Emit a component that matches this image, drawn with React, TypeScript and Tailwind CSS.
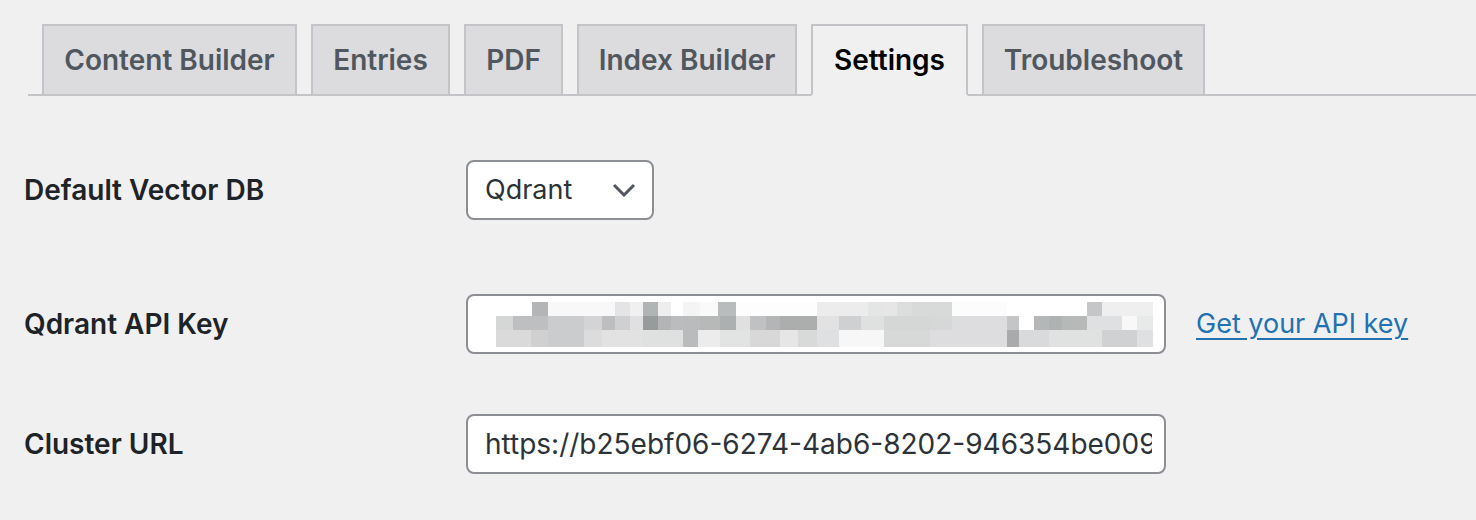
import React from 'react';

const tabs = [
  { label: 'Content Builder', w: 'w-[255px]' },
  { label: 'Entries', w: 'w-[139px]' },
  { label: 'PDF', w: 'w-[99px]' },
  { label: 'Index Builder', w: 'w-[220px]' },
  { label: 'Settings', w: 'w-[157px]', active: true },
  { label: 'Troubleshoot', w: 'w-[223px]' },
];

// pixelated (blurred) api key: [x0, x1, colour] per row, relative to the mosaic box
const mosaic: { y: number; h: number; cells: [number, number, string][] }[] = [
  {
    y: 0,
    h: 14,
    cells: [
      [36, 52, '#b4b5b6'], [52, 119, '#f8f8f8'], [119, 134, '#e4e4e6'], [134, 147, '#f0f0f0'],
      [147, 162, '#b1b4b4'], [162, 175, '#eeeeee'], [187, 204, '#f4f4f4'], [204, 222, '#fafafa'],
      [222, 240, '#b9bcbc'], [240, 321, '#fdfdfd'], [321, 372, '#ececec'], [372, 387, '#e4e5e5'],
      [387, 401, '#e6e6e7'], [401, 416, '#dcdddd'], [416, 456, '#d8d9d9'], [456, 511, '#fcfcfc'],
      [591, 606, '#c5c6c7'], [606, 657, '#efefef'],
    ],
  },
  {
    y: 14,
    h: 14,
    cells: [
      [0, 17, '#d5d6d6'], [17, 52, '#bebfc0'], [52, 88, '#cbcccd'], [88, 106, '#d4d4d6'],
      [106, 119, '#bdbebf'], [119, 134, '#cfd0d2'], [134, 147, '#e0e0e2'], [147, 162, '#989b9c'],
      [162, 175, '#b2b4b5'], [175, 187, '#bbbcbd'], [187, 204, '#b9bbbc'], [204, 224, '#b7b9b9'],
      [224, 240, '#adb0b0'], [240, 254, '#e0e0e1'], [254, 270, '#c0c1c2'], [270, 284, '#b3b5b6'],
      [284, 321, '#acaeae'], [321, 343, '#e2e2e3'], [343, 365, '#cfd0d1'], [365, 388, '#dfe0e0'],
      [388, 434, '#d5d6d6'], [434, 456, '#d6d7d7'], [456, 511, '#dddddf'], [511, 523, '#c4c5c6'],
      [538, 553, '#b4b6b7'], [553, 566, '#afb2b3'], [566, 591, '#b7b9b9'], [591, 626, '#dfe0e1'],
      [626, 641, '#f8f8f8'], [641, 657, '#e8e9e9'],
    ],
  },
  {
    y: 28,
    h: 17,
    cells: [
      [0, 35, '#dadadb'], [35, 52, '#d0d0d1'], [52, 88, '#cbcccd'], [88, 106, '#dcdcdd'],
      [106, 147, '#e2e2e3'], [147, 187, '#dfe0e0'], [187, 202, '#b9bbbc'], [202, 224, '#ececec'],
      [224, 254, '#e2e3e3'], [254, 284, '#d8d8d8'], [284, 302, '#e6e6e7'], [302, 321, '#d8d9d9'],
      [321, 343, '#dfe0e1'], [343, 388, '#f7f7f7'], [388, 434, '#d7d8d8'], [434, 511, '#dddddf'],
      [511, 523, '#a8aaab'], [523, 553, '#d9dadb'], [553, 606, '#e0e1e1'], [606, 641, '#d0d1d2'],
      [641, 657, '#dfe0e1'],
    ],
  },
];

const BlurredKey = () => (
  <svg width="657" height="45" viewBox="0 0 657 45" className="block">
    {mosaic.map((row) =>
      row.cells.map(([x0, x1, c]) => (
        <rect key={`${row.y}-${x0}`} x={x0} y={row.y} width={x1 - x0} height={row.h} fill={c} />
      ))
    )}
  </svg>
);

export default function App() {
  return (
    <div
      className="min-h-[520px] w-full bg-[#f0f0f1] text-[#1d2327]"
      style={{ fontFamily: 'Inter, "Noto Sans", sans-serif' }}
    >
      {/* tabs */}
      <div className="pt-[24px] pl-[28px]">
        <nav className="flex gap-[14px] border-b-2 border-[#c3c4c7] pl-[14px]">
          {tabs.map((t) => (
            <a
              key={t.label}
              className={`-mb-[2px] flex h-[72px] items-center justify-center border-2 border-[#c3c4c7] pb-[1px] text-[28px] font-semibold ${t.w} ${
                t.active
                  ? 'border-b-[#f0f0f1] bg-[#f0f0f1] text-black'
                  : 'bg-[#dcdcde] text-[#50575e]'
              }`}
            >
              {t.label}
            </a>
          ))}
        </nav>
      </div>

      {/* settings form */}
      <div className="pl-[24px]">
        <div className="mt-[64px] flex items-center">
          <label className="w-[442px] text-[28px] font-semibold">Default Vector DB</label>
          <div className="flex h-[60px] w-[188px] items-center justify-between rounded-[8px] border-2 border-[#8c8f94] bg-white pl-[17px] pr-[16px] text-[27px] text-[#2c3338]">
            <span>Qdrant</span>
            <svg width="24" height="14" viewBox="0 0 24 14" fill="none">
              <path d="M2 2l10 10L22 2" stroke="#50575e" strokeWidth="3" />
            </svg>
          </div>
        </div>

        <div className="mt-[74px] flex items-center">
          <label className="w-[442px] text-[28px] font-semibold">Qdrant API Key</label>
          <div className="flex h-[60px] w-[700px] items-center rounded-[8px] border-2 border-[#8c8f94] bg-white pl-[28px]">
            <BlurredKey />
          </div>
          <a className="ml-[30px] text-[27px] text-[#2271b1] underline underline-offset-[5px]">Get your API key</a>
        </div>

        <div className="mt-[60px] flex items-center">
          <label className="w-[442px] text-[28px] font-semibold">Cluster URL</label>
          <input
            readOnly
            value="https://b25ebf06-6274-4ab6-8202-946354be0091.us-east4-0.gcp.cloud.qdrant.io"
            className="h-[60px] w-[700px] rounded-[8px] border-2 border-[#8c8f94] bg-white pl-[17px] pr-[12px] text-[28px] text-[#2c3338] outline-none"
          />
        </div>
      </div>
    </div>
  );
}
